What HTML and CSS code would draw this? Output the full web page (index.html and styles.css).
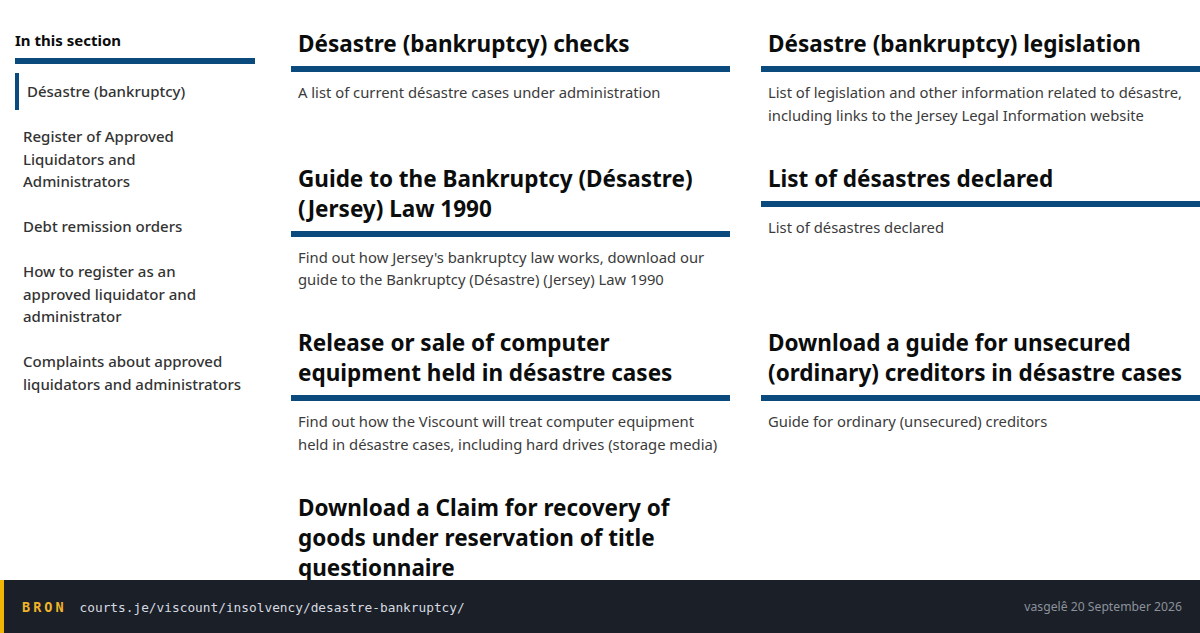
FILE: index.html
```html
<!DOCTYPE html>
<html lang="en">
<head>
<meta charset="utf-8">
<title>Désastre (bankruptcy)</title>
<link rel="stylesheet" href="styles.css">
</head>
<body>
<div class="page">
  <div class="content">
    <aside class="sidebar">
      <h2 class="sidebar-title">In this section</h2>
      <ul class="side-nav">
        <li class="side-item active">Désastre (bankruptcy)</li>
        <li class="side-item">Register of Approved Liquidators and Administrators</li>
        <li class="side-item">Debt remission orders</li>
        <li class="side-item">How to register as an approved liquidator and administrator</li>
        <li class="side-item">Complaints about approved liquidators and administrators</li>
      </ul>
    </aside>
    <main class="cards">
      <section class="card">
        <h3 class="card-title">Désastre (bankruptcy) checks</h3>
        <p class="card-desc">A list of current désastre cases under administration</p>
      </section>
      <section class="card">
        <h3 class="card-title">Désastre (bankruptcy) legislation</h3>
        <p class="card-desc">List of legislation and other information related to désastre, including links to the Jersey Legal Information website</p>
      </section>
      <section class="card">
        <h3 class="card-title">Guide to the Bankruptcy (Désastre) (Jersey) Law 1990</h3>
        <p class="card-desc">Find out how Jersey's bankruptcy law works, download our guide to the Bankruptcy (Désastre) (Jersey) Law 1990</p>
      </section>
      <section class="card">
        <h3 class="card-title">List of désastres declared</h3>
        <p class="card-desc">List of désastres declared</p>
      </section>
      <section class="card">
        <h3 class="card-title">Release or sale of computer equipment held in désastre cases</h3>
        <p class="card-desc">Find out how the Viscount will treat computer equipment held in désastre cases, including hard drives (storage media)</p>
      </section>
      <section class="card">
        <h3 class="card-title">Download a guide for unsecured (ordinary) creditors in désastre cases</h3>
        <p class="card-desc">Guide for ordinary (unsecured) creditors</p>
      </section>
      <section class="card">
        <h3 class="card-title">Download a Claim for recovery of goods under reservation of title questionnaire</h3>
      </section>
    </main>
  </div>
  <footer class="source-bar">
    <div class="source-left">
      <span class="source-label">BRON</span>
      <span class="source-url">courts.je/viscount/insolvency/desastre-bankruptcy/</span>
    </div>
    <span class="source-date">vasgelê 20 September 2026</span>
  </footer>
</div>
</body>
</html>
```

FILE: styles.css
```css
html, body {
  margin: 0;
  padding: 0;
  background: #ffffff;
}

body {
  font-family: "Noto Sans", "Open Sans", sans-serif;
  color: #0b0c0c;
}

.page {
  height: 633px;
  display: flex;
  flex-direction: column;
  overflow: hidden;
}

.content {
  flex: 1;
  min-height: 0;
  overflow: hidden;
  display: flex;
  align-items: flex-start;
  padding: 29px 0 0 15px;
  gap: 36px;
}

/* Sidebar */
.sidebar {
  width: 240px;
  flex: 0 0 240px;
}

.sidebar-title {
  margin: 0;
  font-size: 15px;
  line-height: 22px;
  font-weight: 700;
  color: #0b0c0c;
  padding-bottom: 7px;
  border-bottom: 6px solid #0b4a7c;
}

.side-nav {
  list-style: none;
  margin: 9px 0 0;
  padding: 0;
}

.side-item {
  font-size: 15px;
  line-height: 22.5px;
  font-weight: 500;
  color: #333333;
  padding: 7px 10px 7px 8px;
  margin-top: 8.5px;
}

.side-item.active {
  margin-top: 0;
  border-left: 4px solid #0b4a7c;
}

/* Cards */
.cards {
  flex: 0 0 909px;
  display: grid;
  grid-template-columns: 439px 439px;
  column-gap: 31px;
  row-gap: 37.5px;
  align-items: start;
}

.card-title {
  margin: 0;
  font-size: 22.5px;
  line-height: 30px;
  font-weight: 700;
  color: #0b0c0c;
  padding: 0 7px 7px;
  border-bottom: 6px solid #0b4a7c;
}

.card-desc {
  margin: 9px 0 0;
  padding: 0 7px;
  font-size: 14.8px;
  line-height: 22.5px;
  color: #3b3b3b;
}

/* Footer source bar */
.source-bar {
  flex: 0 0 53px;
  height: 53px;
  box-sizing: border-box;
  background: #1b1f27;
  border-left: 4px solid #f2b705;
  display: flex;
  align-items: center;
  justify-content: space-between;
  padding: 0 18px;
}

.source-left {
  display: flex;
  align-items: baseline;
  gap: 13px;
}

.source-label {
  font-family: "DejaVu Sans Mono", "Liberation Mono", monospace;
  font-weight: 700;
  font-size: 13.5px;
  letter-spacing: 3px;
  color: #f0b429;
}

.source-url {
  font-family: "DejaVu Sans Mono", "Liberation Mono", monospace;
  font-size: 12.8px;
  color: #d6dae0;
}

.source-date {
  font-family: "Noto Sans", "Open Sans", sans-serif;
  font-size: 12.2px;
  color: #8b929c;
}
```
